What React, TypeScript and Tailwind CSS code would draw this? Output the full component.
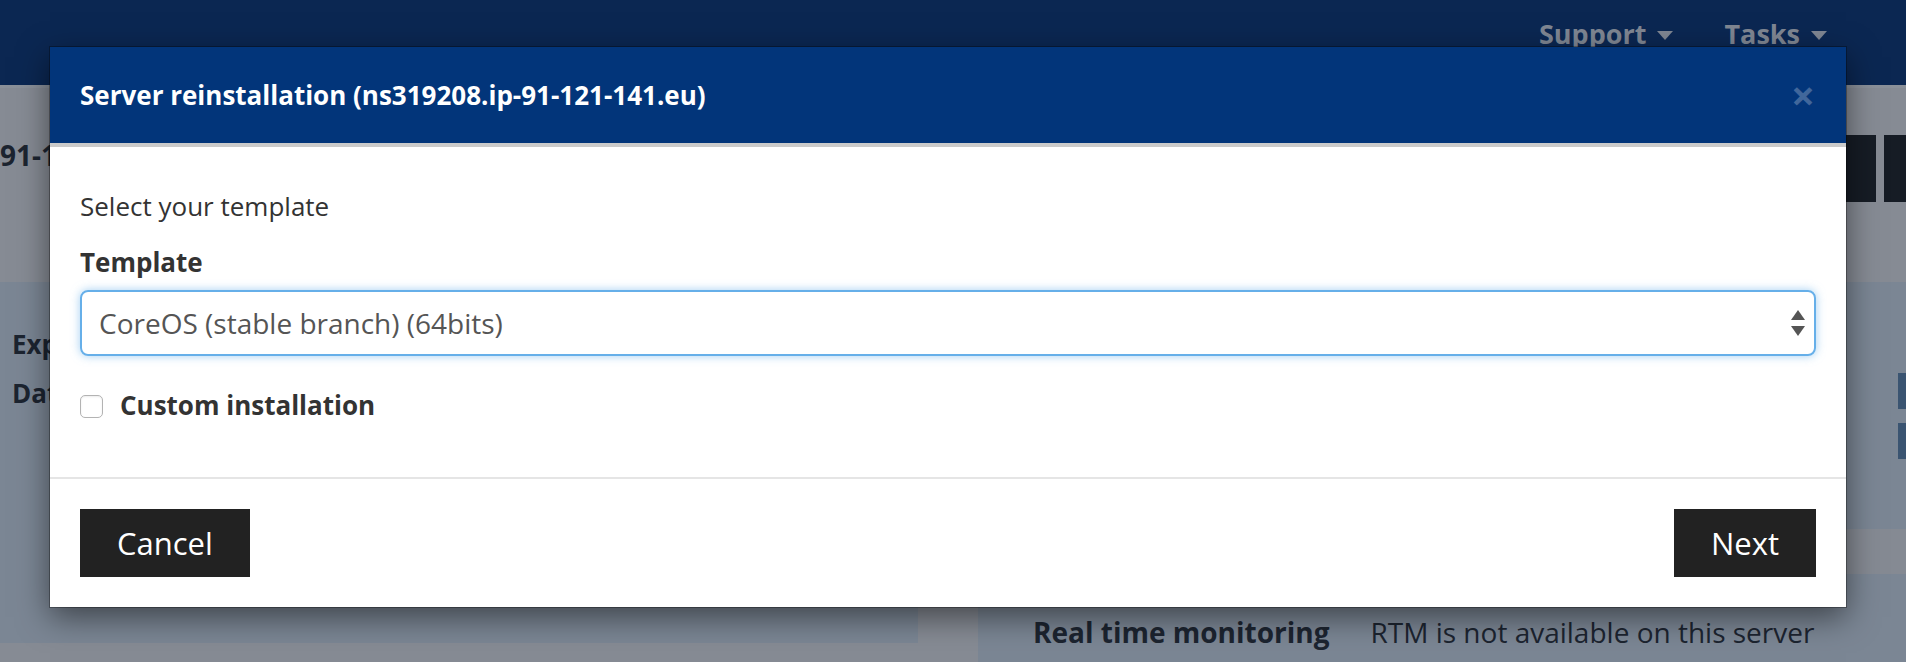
import React from 'react';

const SelectArrows = () => (
  <svg width="14" height="27" viewBox="0 0 14 27" className="shrink-0">
    <path d="M0 10 L7 0 L14 10 Z" fill="#555" />
    <path d="M0 16 L14 16 L7 26 Z" fill="#555" />
  </svg>
);

const Caret = () => (
  <svg width="16" height="9" viewBox="0 0 16 9" className="ml-[11px] mt-[15px] shrink-0">
    <path d="M0 0 L16 0 L8 9 Z" fill="#7f8692" />
  </svg>
);

const PageBehind = () => {
  return (
    <div className="flex h-full flex-col">
      <nav className="flex h-[88px] shrink-0 items-start justify-end gap-[51px] border-b-[3px] border-[#8a9099] bg-[#0b2752] pr-[79px] pt-[16px]">
        {['Support', 'Tasks'].map((item) => (
          <div key={item} className="flex items-start">
            <span className="text-[27px] font-bold leading-[36px] text-[#7f8692]">{item}</span>
            <Caret />
          </div>
        ))}
      </nav>

      <div className="flex h-[194px] shrink-0 items-start justify-between pt-[47px]">
        <h1 className="text-[28px] font-bold leading-[40px] text-[#1c2430]">91-121-141.eu</h1>
        <div className="flex gap-[8px]">
          <div className="h-[67px] w-[120px] bg-[#161c25]" />
          <div className="h-[67px] w-[22px] bg-[#161c25]" />
        </div>
      </div>

      <div className="flex flex-1">
        <div className="h-[361px] w-[918px] bg-[#7b8694] pl-[12px] pt-[44px]">
          <div className="space-y-[13px] text-[26px] font-bold leading-[36px] text-[#1c2430]">
            <div>Expiry</div>
            <div>Date</div>
          </div>
        </div>

        <div className="ml-[60px] flex flex-1 flex-col bg-[#7b8694]">
          <div className="flex flex-col items-end gap-[14px] pt-[91px]">
            <div className="h-[36px] w-[8px] bg-[#3a5471]" />
            <div className="h-[36px] w-[8px] bg-[#3a5471]" />
          </div>
          <div className="mt-[70px] h-[45px] bg-[#858a93]" />
          <div className="flex gap-[41px] pl-[55px] pt-[39px] text-[28px] leading-[38px] text-[#1c2430]">
            <span className="font-bold">Real time monitoring</span>
            <span>RTM is not available on this server</span>
          </div>
        </div>
      </div>
    </div>
  );
};

const ReinstallModal = () => {
  return (
    <div className="absolute left-[50px] top-[47px] w-[1796px] bg-white shadow-[0_0_0_1px_rgba(0,0,0,0.3),0_10px_30px_rgba(0,0,0,0.5)]">
      <header className="flex h-[100px] items-center justify-between border-b-4 border-[#cbcbcb] bg-[#02357a] pl-[30px] pr-[31px]">
        <h4 className="text-[26px] font-bold leading-[36px] text-white">
          Server reinstallation (ns319208.ip-91-121-141.eu)
        </h4>
        <button className="text-[42px] font-bold leading-none text-white/25">×</button>
      </header>

      <div className="px-[30px] pb-[54px] pt-[41px] text-[26px] leading-[36px] text-[#333]">
        <p>Select your template</p>
        <label className="mt-[20px] block font-bold">Template</label>
        <div className="mt-[10px] flex h-[66px] items-center justify-between rounded-[8px] border-2 border-[#66afe9] pl-[17px] pr-[9px] text-[28px] text-[#555] shadow-[0_0_10px_rgba(102,175,233,0.6)]">
          <span>CoreOS (stable branch) (64bits)</span>
          <SelectArrows />
        </div>
        <div className="mt-[31px] flex items-center gap-[17px]">
          <span className="mt-[3px] h-[23px] w-[23px] rounded-[5px] border border-[#b3b3b3] bg-white shadow-[inset_0_1px_2px_rgba(0,0,0,0.08)]" />
          <span className="font-bold">Custom installation</span>
        </div>
      </div>

      <div className="border-t-2 border-[#e5e5e5]" />

      <footer className="flex justify-between p-[30px]">
        <button className="flex h-[68px] items-center bg-[#222] px-[37px] text-[31px] text-white">Cancel</button>
        <button className="flex h-[68px] items-center bg-[#222] px-[37px] text-[31px] text-white">Next</button>
      </footer>
    </div>
  );
};

export default function App() {
  return (
    <div className="relative h-[662px] w-[1906px] overflow-hidden bg-[#868b94] [font-family:'Open_Sans',sans-serif]">
      <PageBehind />
      <ReinstallModal />
    </div>
  );
}
